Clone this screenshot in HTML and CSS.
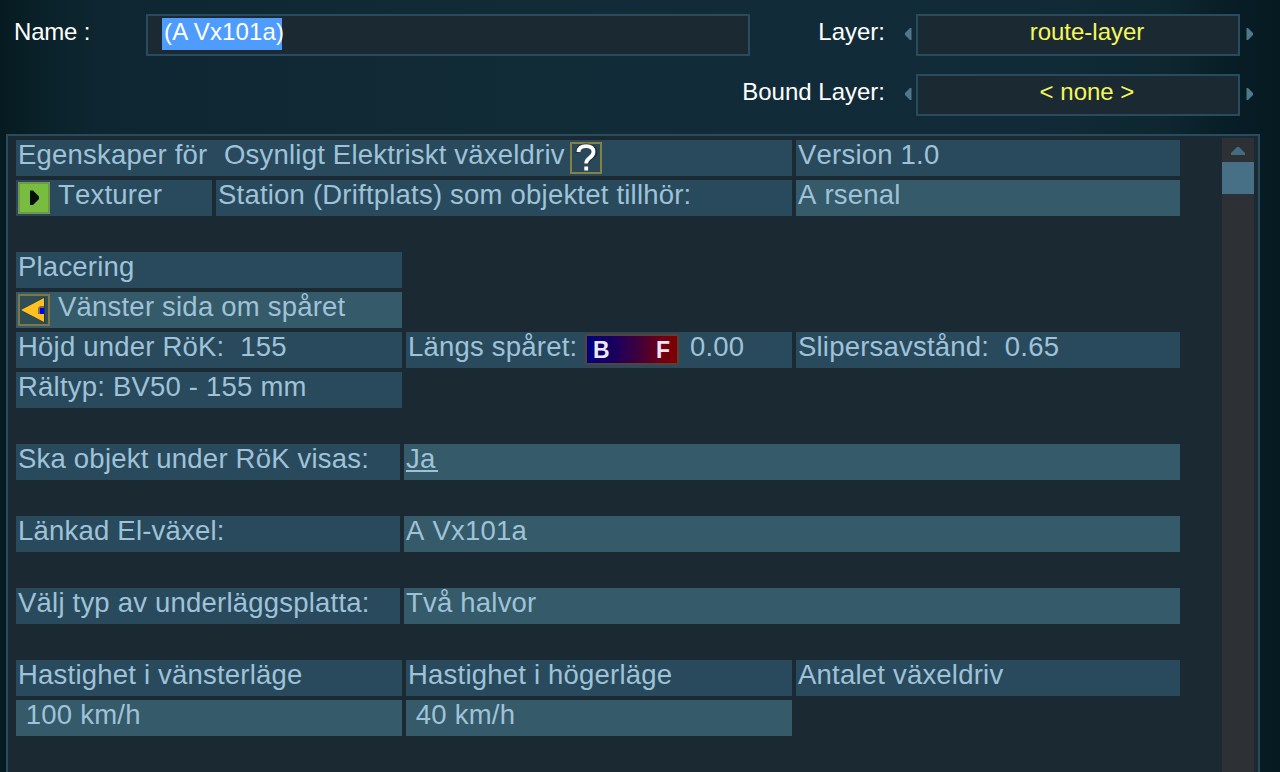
FILE: index.html
```html
<!DOCTYPE html>
<html lang="sv">
  <head>
    <meta charset="utf-8" />
    <meta name="viewport" content="width=device-width, initial-scale=1" />
    <title>Egenskaper</title>
    <link rel="stylesheet" href="styles.css">
  </head>
  <body>
    <!-- Name and layer fields -->
    <header class="toolbar">
      <div class="toolbar-row">
        <span class="label name-label">Name :</span>
        <div class="field name-field"><span class="selected">(A Vx101a)</span></div>
        <span class="label layer-label">Layer:</span>
        <svg class="arrow" width="8" height="14" viewBox="0 0 8 14"><path d="M7.500 1v12H6L1 8V6l5-5z" /></svg>
        <div class="field layer-field">route-layer</div>
        <svg class="arrow" width="8" height="14" viewBox="0 0 8 14"><path d="M.5 1v12H2l5-5V6L2 1z" /></svg>
      </div>
      <div class="toolbar-row">
        <span class="label layer-label">Bound Layer:</span>
        <svg class="arrow" width="8" height="14" viewBox="0 0 8 14"><path d="M7.500 1v12H6L1 8V6l5-5z" /></svg>
        <div class="field layer-field">&lt; none &gt;</div>
        <svg class="arrow" width="8" height="14" viewBox="0 0 8 14"><path d="M.5 1v12H2l5-5V6L2 1z" /></svg>
      </div>
    </header>

    <!-- Object properties -->
    <main class="panel">
      <div class="properties">
        <div class="row row-title">
          <div class="cell"><span class="title-start">Egenskaper för</span><span class="title-text">Osynligt Elektriskt växeldriv</span>
            <svg class="icon" width="32" height="32" viewBox="0 0 32 32">
              <rect x="1" y="1" width="30" height="30" fill="#29495a" stroke="#858044" stroke-width="2" />
              <path d="M7 11c0-5 3-8 9-8 6.500 0 10 3 10 7.500S21 16 18 19v3" fill="none" stroke="#1b303b" stroke-width="3" />
              <path d="M8.500 10c.2-4 3-5.800 7.500-5.800s7.500 2 7.500 5.800c0 3-1.800 4.500-4.300 6.300-2.200 1.600-3 2.700-3 5.200M16.200 24.500v4" fill="none" stroke="#fff" stroke-width="3.800" />
            </svg>
          </div>
          <div class="cell">Version 1.0</div>
        </div>
        <div class="row row-station">
          <div class="cell with-icon">
            <svg class="icon" width="32" height="32" viewBox="0 0 32 32">
              <rect x="1" y="1" width="30" height="30" fill="#79bd40" stroke="#73964c" stroke-width="2" />
              <path d="M12 8.500h3l6 6v2.500l-6 6h-3z" fill="#071006" />
            </svg>
            <span>Texturer</span>
          </div>
          <div class="cell">Station (Driftplats) som objektet tillhör:</div>
          <div class="cell value">A rsenal</div>
        </div>

        <div class="row group">
          <div class="cell">Placering</div>
        </div>
        <div class="row">
          <div class="cell value with-icon">
            <svg class="icon" width="32" height="32" viewBox="0 0 32 32">
              <rect x="1" y="1" width="30" height="30" fill="#304e55" stroke="#807844" stroke-width="2" />
              <path d="M2 16L27 3v26z" fill="#27363a" />
              <path d="M3 16L26 4v24z" fill="#ffc020" />
              <path d="M26 12h-4l-2 2v6h6z" fill="#77704a" />
              <path d="M22 14h4v6h-4z" fill="#0000ee" />
            </svg>
            <span>Vänster sida om spåret</span>
          </div>
        </div>
        <div class="row">
          <div class="cell">Höjd under RöK:&nbsp; 155</div>
          <div class="cell"><span class="along">Längs spåret:</span>
            <span class="direction"><b>B</b><b>F</b></span>
            <span>0.00</span>
          </div>
          <div class="cell">Slipersavstånd:&nbsp; 0.65</div>
        </div>
        <div class="row">
          <div class="cell">Rältyp: BV50 - 155 mm</div>
        </div>

        <div class="row row-pair group">
          <div class="cell">Ska objekt under RöK visas:</div>
          <div class="cell value"><span class="link">Ja</span></div>
        </div>
        <div class="row row-pair group">
          <div class="cell">Länkad El-växel:</div>
          <div class="cell value">A Vx101a</div>
        </div>
        <div class="row row-pair group">
          <div class="cell">Välj typ av underläggsplatta:</div>
          <div class="cell value">Två halvor</div>
        </div>

        <div class="row group">
          <div class="cell">Hastighet i vänsterläge</div>
          <div class="cell">Hastighet i högerläge</div>
          <div class="cell">Antalet växeldriv</div>
        </div>
        <div class="row">
          <div class="cell value">&nbsp;100 km/h</div>
          <div class="cell value">&nbsp;40 km/h</div>
        </div>
      </div>

      <div class="scrollbar">
        <svg class="scroll-up" width="16" height="10" viewBox="0 0 16 10"><path d="M7 1h2l6 6v2H1V7z" /></svg>
        <div class="thumb"></div>
      </div>
    </main>
  </body>
</html>
```

FILE: styles.css
```css
* {
  box-sizing: border-box;
}

body {
  margin: 0;
  height: 772px;
  overflow: hidden;
  display: flex;
  flex-direction: column;
  font-family: "Liberation Sans", Arial, sans-serif;
  background: linear-gradient(to right, #061b21 0, #0a222a 50px, #0e2631 100px, #102935 350px, #112c38 700px, #102b37 1050px, #0d2630 1170px, #071c24 1240px, #061a22 1280px);
}

/* Top fields */
.toolbar {
  height: 134px;
  flex: none;
  padding: 14px 26px 0 14px;
  display: flex;
  flex-direction: column;
  gap: 18px;
  font-size: 24px;
  line-height: 31px;
  color: #fff;
}

.toolbar-row {
  display: flex;
  justify-content: flex-end;
  height: 42px;
}

.label {
  padding-top: 2px;
  white-space: nowrap;
}

.name-label {
  width: 132px;
  letter-spacing: -0.2px;
}

.layer-label {
  flex: 1;
  text-align: right;
  margin-right: 19px;
}

.field {
  border: 2px solid #284b5e;
  background: #1b2a32;
}

.name-field {
  width: 604px;
  padding: 2px 14px;
}

.selected {
  display: block;
  width: 120px;
  height: 32px;
  padding-left: 2px;
  line-height: 27px;
  letter-spacing: 0.15px;
  white-space: nowrap;
  background: #4f9cff;
}

.layer-field {
  width: 324px;
  margin: 0 6px 0 4px;
  padding-left: 18px;
  text-align: center;
  color: #f5f75c;
}

.arrow {
  margin-top: 13px;
  fill: #50778a;
}

/* Properties panel */
.panel {
  flex: 1;
  width: 1254px;
  margin-left: 6px;
  padding: 4px 4px 0 8px;
  display: flex;
  justify-content: space-between;
  border: 2px solid #284b5e;
  border-bottom: 0;
  background: #1b2a32;
  box-shadow: -6px 0 #061b21;
}

.properties {
  width: 1164px;
  display: flex;
  flex-direction: column;
  gap: 4px;
  font-size: 27.5px;
  font-kerning: none;
  line-height: 29px;
  letter-spacing: 0.21px;
  color: #9fc2d8;
}

.row {
  display: grid;
  grid-template-columns: 386px 386px 384px;
  gap: 4px;
  height: 36px;
}

.row-title {
  grid-template-columns: 776px 384px;
}

.row-station {
  grid-template-columns: 196px 576px 384px;
}

.row-pair {
  grid-template-columns: 384px 776px;
}

.group {
  margin-top: 32px;
}

.cell {
  display: flex;
  padding-left: 2px;
  white-space: nowrap;
  background: #294a5c;
}

.value {
  background: #355a69;
}

.icon {
  flex: none;
  margin-top: 2px;
}

.with-icon {
  gap: 8px;
}

.title-start {
  width: 206px;
}

.title-text {
  width: 346px;
}

.along {
  width: 177px;
}

.link {
  width: 32px;
  height: 28px;
  border-bottom: 2px solid #9fc2d8;
}

.direction {
  width: 94px;
  height: 31px;
  margin: 2px 11px 0 0;
  padding: 0 7px 0 6px;
  display: flex;
  justify-content: space-between;
  border: 2px solid #5a4133;
  font-size: 23px;
  line-height: 28px;
  letter-spacing: 0;
  color: #eee6f4;
  background: linear-gradient(to right, #000080, #110064 25%, #3c0040 55%, #690018 80%, #800000);
}

/* Scrollbar */
.scrollbar {
  width: 32px;
  margin-top: -2px;
  background: #2d3135;
}

.scroll-up {
  display: block;
  margin: 8px 8px 6px;
  fill: #426b7f;
}

.thumb {
  height: 32px;
  background: #477086;
}
```
